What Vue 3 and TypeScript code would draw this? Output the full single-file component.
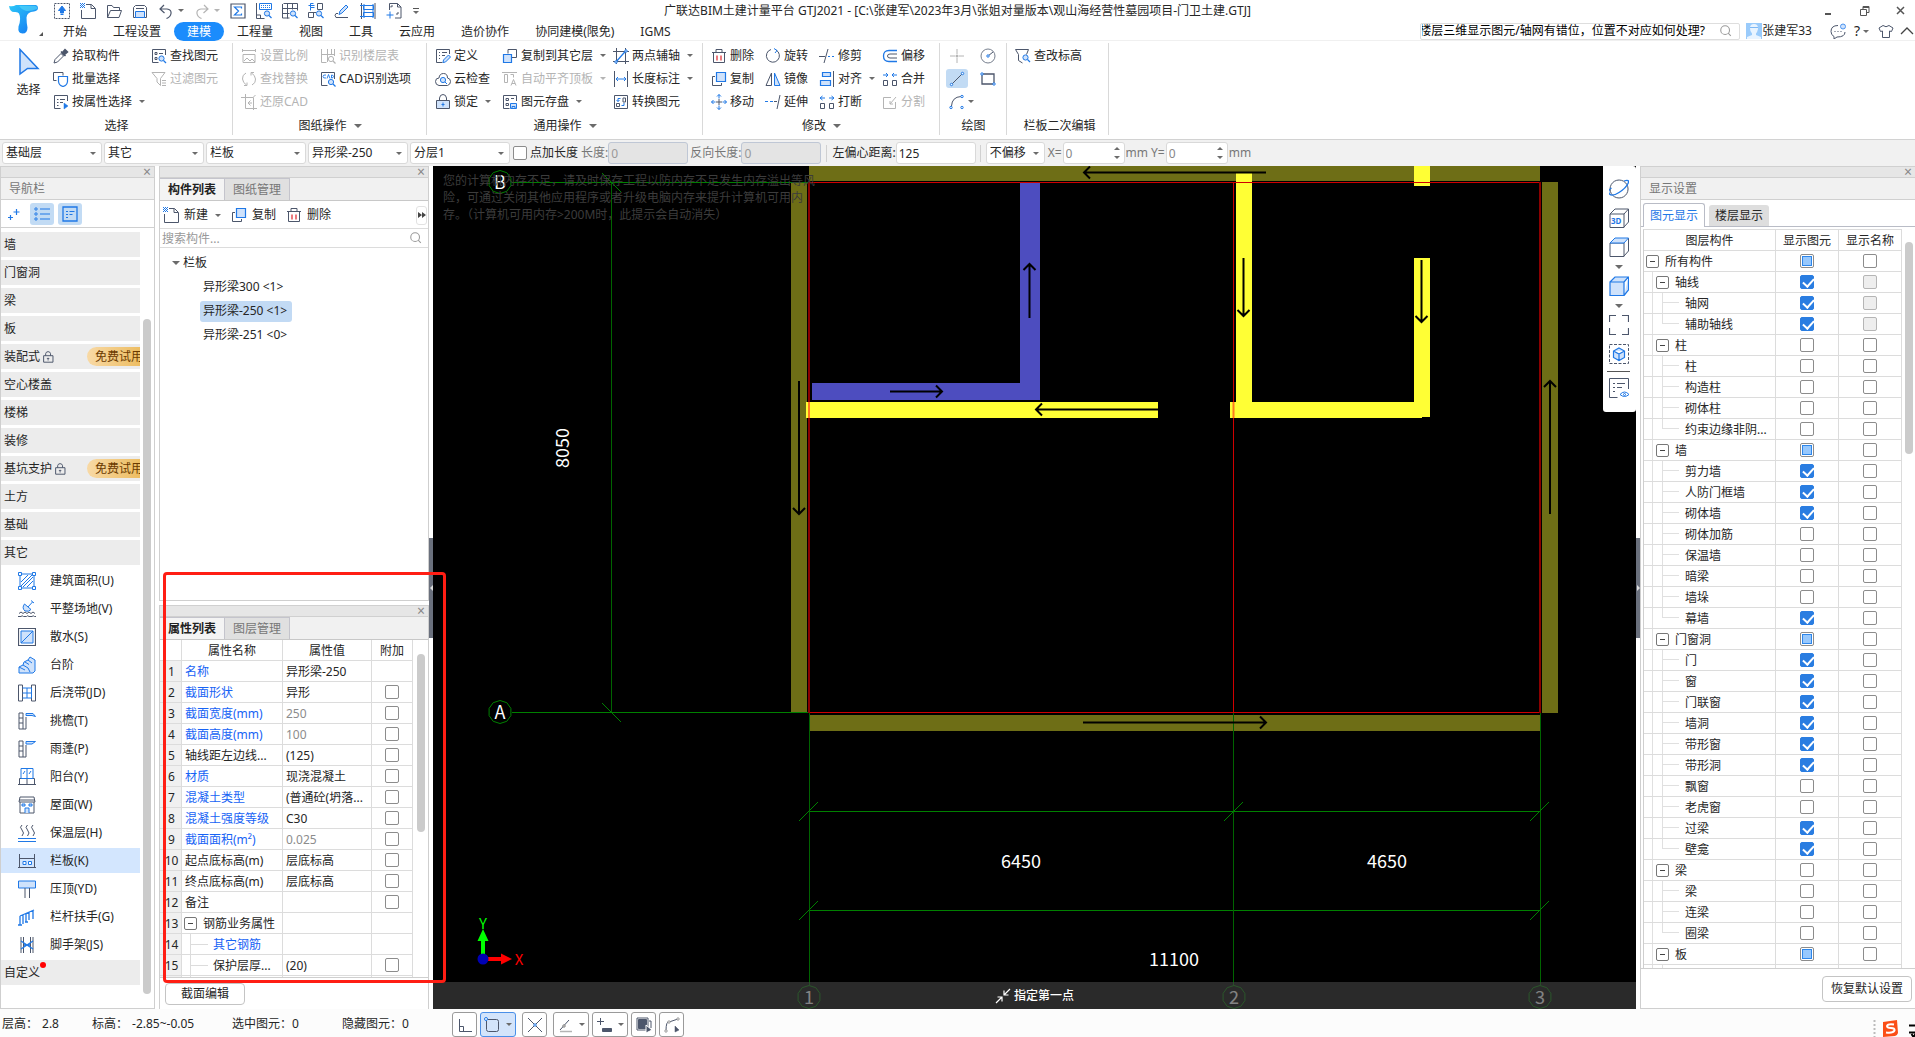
<script setup lang="ts">
import { ref } from 'vue'

const DARK = '#4c566b'
const BLUE = '#1f78e6'
const PALE = '#cfe2fb'
const GREY = '#b4b4b4'

const p = (c: string, d: string, f = 'none', w = 1, extra = '') =>
  `<path d="${d}" fill="${f}" stroke="${c}" stroke-width="${w}" ${extra}/>`
const D = (d: string, f = 'none', w = 1) => p(DARK, d, f, w)
const B = (d: string, f = 'none', w = 1) => p(BLUE, d, f, w)
const G = (d: string, f = 'none', w = 1) => p(GREY, d, f, w)
const lens = (x: number, y: number, c = BLUE, f = PALE) =>
  `<circle cx="${x}" cy="${y}" r="2.6" fill="${f}" stroke="${c}"/>` + p(c, `M${x + 2} ${y + 2}l2.5 2.5`, 'none', 1.3)
const dot = (x: number, y: number, c = BLUE, r = 1.2, f = '#fff') => `<circle cx="${x}" cy="${y}" r="${r}" fill="${f}" stroke="${c}"/>`

const icons: Record<string, string> = {
  upload: p(DARK, 'M.5.5h15v15H.5z', 'none', 1, 'stroke-dasharray="2 1"') + B('M8 3l3.5 4.5h-2V10h-3V7.5h-2zM6.5 11.5h3', BLUE),
  newdoc: D('M6 1.5h5.500l4 4v10h-14V7M11 1.500v4h4') + p(BLUE, 'M0 .5h5M1 1.500h4M0 2.500h5M1 3.500h4M0 4.500h5', 'none', 1, 'stroke-dasharray="1 1"'),
  open: D('M1.500 14.500v-12h4.500l1.500 2h6v3M1.500 14.500l3-7h11l-2.500 7z'),
  save: D('M1.500 14.500v-10l2-2h9l2 2v10zM4 5.500h8') + B('M3.500 8.500h9v6h-9z', PALE),
  undo: D('M6 2L2 6l4.500 4M2 6h7q4.500.5 4 4.500-.5 3.500-4.500 5', 'none', 1.2),
  redo: G('M10 2l4 4-4.500 4M14 6H7Q2.500 6.500 3 10.500q.5 3.500 4.500 5', 'none', 1.2),
  sigma: D('M1 1h14v14H1z', 'none', 1.2) + B('M11.500 5.500V4h-7L8.500 8l-4 4h7v-1.500', 'none', 1.2),
  sheet: D('M.5 0v15.500h8M.5 12h4v3') + B('M3.500.5h12v6h-12z') + p(BLUE, 'M5 2.500h9M5 4.500h9', 'none', 1, 'stroke-dasharray="1 1"') + lens(11, 10.500),
  gridlens: D('M1.500.5h14M.5 1v14h7M.5 5.500h15M.5 10.500h7M5.500.5v15M10.500.5v6M15.500.5v7') + lens(11, 10.500),
  find: D('M9.500.5h5v6h-5zM.5 9.500h5v5h-5zM5 9.500h3') + B('M5.500.5h-3v4h4M.5 2.500h6M2.500 4.500v3') + lens(11, 10.500),
  brush: D('M4 10.500H2Q0 12 2 14.500h12') + B('M5 11.500l1-3.500 6-6 2 2-6 6z', PALE),
  ladder: D('M1.500 0v16M15 0v16') + B('M3.500 2.500h10v4h-10zM3.500 9.500h10v4h-10zM0 2.500h3M0 13.500h3M4 1v14M13 1v14'),
  addpage: D('M3.500 7V.5h8l3.500 3.500v11H9M11.500.5V4H15M5 4.500V3h2M12 9v2h-2') + B('M4 8.500v7M.5 12h7'),
  picker: D('M1 15l1-3.500 6-6 2.500 2.500-6 6z') + D('M8 3.500L12.500 8M9 5l3-3.500 2.500 2.500L11 7z', DARK, 1.5),
  batch: D('M3.500 9.500h-3v-8h9.500v3') + B('M5.500 5.500h9v5q-.5 4-4.500 5-4-1-4.500-5z', '#fff', 1.2),
  byprop: D('M14.500 7V1.500h-13v13h6M4 5.500h1.500M7 5.500h5M4 8.500h1.500M7 8.500h3M4 11.500h1.500') + B('M11 9l4 3-4 3z', BLUE, .5),
  findel: D('M14.500 7V1.500h-13v13h6M4 4.500h2v2H4zM8 5.500h4M4 9.500h2v2H4z') + lens(10.500, 10.500),
  filter: G('M1 1.500h13l-4.500 6v7L6 11V7.500zM11 9.500h4M11 12h4M11 14.500h4'),
  scale: G('M1.500 1v3M14.500 1v3M1.500 2.500h13M2 6.500h12v8H2zM3 13l3-3 3 3 2-2 3 3'),
  floortab: G('M1.500 1v13.500h5M1.500 6.500h13M7.500 1v13M11.500 1v5M14.500 1v7') + lens(11, 11, GREY, '#fff'),
  replace: G('M5 2Q1 4 1.500 8t4 6M3 14.500h3V11.500M11 14q4-2 3.500-6t-4-6M13 1.500h-3v3'),
  cadopt: D('M14.500 8V1.500h-13v13h6') + lens(11, 11) + B('M6 4q-3-.5-3 1.500t3 1.500M7 7.500L8.500 3.500 10 7.500M11.500 4v3q2 0 2-1.500T11.500 4', 'none', .9),
  restore: G('M4.500 0v14.500H16M0 3.500h12.500V16M14.500 1l-2 2M11 9H8M9.500 6.500L7 9l2.500 2.500'),
  define: D('M14.500 6V1.500h-13v13h6M4 4.500h1M7 4.500h5M4 7.500h1M7 7.500h3M4 10.500h1') + B('M8 14.500l.5-2.500 5-5 2 2-5 5z', PALE),
  cloud: D('M4 14.500Q.5 14 .5 10.500T4 7q.5-4.500 4.500-4.500T12.500 7q3 .5 3 3.500t-3 4z') + '<circle cx="8" cy="9" r="2.600" fill="#cfe2fb" stroke="#1f78e6"/>' + B('M10 11l2 2'),
  lock: D('M4.500 6.500V4q.5-3.500 3.500-3.500T11.500 4v2.500') + D('M1.500 6.500h13v8h-13z', PALE) + B('M8 8.500v4M6.500 10.500h3'),
  copyfloor: D('M6 1.500h8.500v8H10M6 5.500v-4') + B('M1.500 6.500h8v8h-8z', PALE, 1.2),
  flush: G('M0 1.500h15M2.500 3.500h3v8h-3zM8.500 3.500h3v3M9 14.500l2.500-6 2.500 6M10 12.500h3'),
  storage: D('M14.500 7V1.500h-13v13h6M4 4.500h2.500v2H4zM9 4.500h3M4 9.500h2.500v2H4z') + B('M8.500 9.500h6v5h-6zM10 14.500v-2h3v2', PALE),
  twopt: D('M3.500 0v16M12.500 0v16M0 3.500h16M0 13.500h16') + B('M2.500 14.500L13.500 2', 'none', 1.3) + dot(13, 3) + dot(3, 14),
  dim: D('M1.500 0v16M14.500 0v16') + B('M3 8h10M5 6L3 8l2 2M11 6l2 2-2 2'),
  convert: D('M1.500 1.500h13v13h-13zM10 4h2.500v4H10zM3.500 9.500h3v3h-3z') + B('M7.500 4.500H5v3M3.500 6L5 7.500 6.500 6M8.500 11.500H11V9'),
  del: D('M1 4.500h14M5 4V1.500h6V4M2.500 5v9.500h11V5') + p('#e0252b', 'M6 7.500v5M10 7.500v5', 'none', 1.2),
  copy: D('M4 5.500H1.500v9h9V12') + B('M5.500 1.500h9v9h-9z', PALE, 1.2),
  move: B('M8 .5v15M.5 8h15M6 2.500l2-2 2 2M6 13.500l2 2 2-2M2.500 6l-2 2 2 2M13.500 6l2 2-2 2') + p('#fff', 'M5 5h6v6H5z', '#fff') + D('M8 5v6M5 8h6'),
  rotate: p(DARK, 'M6 1.500a6.500 6.500 0 1 0 5 .5', 'none') + B('M9 .5l3 2-2 2.500'),
  mirror: D('M6.500 2v12.500H1z') + B('M9.500 2v12.500H15z', PALE),
  extend: B('M0 7.500h3M5 7.500h3') + D('M9 7.500h3M15 1l-3 14'),
  trim: D('M0 8.500h6M9 1L5 15') + B('M9 8.500h2M13 8.500h2'),
  align: B('M3.500 1.500h8v4h-8zM1.500 9.500h10v5h-10z', PALE, 1.2) + D('M14.500 0v16'),
  break: D('M1.500 9.500h4v5h-4zM10.500 9.500h4v5h-4z') + B('M1 4h5M3.500 2L1 4l2.500 2M10 4h5M12.500 2L15 4l-2.500 2'),
  merge: D('M1.500 9.500h4v5h-4zM10.500 9.500h4v5h-4z') + B('M1 4h5M4 2l2 2-2 2M15 4h-5M12 2l-2 2 2 2'),
  offset: B('M15 2.500H7q-5.500 0-5.500 5.500T7 13.500h8', 'none', 1.3) + D('M15 6H8Q5.500 6 5.500 8T8 10h7'),
  split: G('M9 3.500H1.500v11h12V8M8 10l6-7M8 10v-3M8 10h3'),
  point: G('M8 1v5M8 10v5M1 8h5M10 8h5') + `<circle cx="8" cy="8" r="1.500" fill="${GREY}"/>`,
  circle: `<circle cx="8" cy="8" r="7" fill="none" stroke="#777f8e"/>` + D('M8 8l5-4') + dot(8, 8),
  line: D('M3 13L13 3') + dot(2.500, 13.500) + dot(13.500, 2.500),
  rect: D('M2 3h12v10H2z', 'none', 1.3) + dot(2, 3) + dot(14, 13),
  arc: D('M2.500 12Q3 3 12 2.500') + dot(2, 13.500) + dot(13, 2.500) + dot(13, 13.500),
  elev: D('M.5 1.500h13l-2 5M.5 1.500l3 5v6l4 2.500') + lens(10.500, 9.500),
  chat: D('M8 2.500Q1 2.500 1 8.500q0 3.500 3 5v2.500l3-2q8 0 8-5') + D('M4.500 8.500h1M7.500 8.500h1M10.500 8.500h1') + '<circle cx="13" cy="3.500" r="2.500" fill="#cfe2fb" stroke="#4a93f0"/>',
  shirt: D('M5 2.500L1 5l1.500 3.500L4.500 8v6.500h7V8l2 .5L15 5l-4-2.500Q8 5 5 2.500z'),
  search: '<circle cx="7" cy="7" r="5" fill="none" stroke="#999" stroke-width="1.200"/><path d="M10.500 10.500l3 3" stroke="#999" stroke-width="1.200"/>',
  padlock: D('M4.500 7V4.500Q5 2 7.500 2T10.500 4.500V7M2 7h11.500v8H2z', 'none', 1.2) + D('M7.500 9.500v3.500M6 10.500h3'),
  pluses: B('M4.500 9v5M2 11.500h5M10.500 3v6M7.500 6h6', 'none', 1.2),
  list: B('M6 3h10M6 8h10M6 13h10', 'none', 1.2) + dot(2, 3, BLUE, 1.2, 'none') + dot(2, 8, BLUE, 1.2, 'none') + dot(2, 13, BLUE, 1.2, 'none'),
  card: B('M1 1h14v14H1z', 'none', 1.3) + B('M4 5.500h2M7.500 5.500h5M4 8.500h2M7.500 8.500h3M4 11.500h2'),
}

const navIcons: Record<string, string> = {
  area: B('M2 2h14v14H2zM3 10l7-7M3 14L14 3M5 15L15 5M9 15l6-6') + B('M.5.5h3v3h-3zM14.500.5h3v3h-3zM.5 14.500h3v3h-3zM14.500 14.500h3v3h-3z', '#fff'),
  level: B('M10 7l4.500-5M13 .500l3 2.500M6.500 4q-3 4 .5 7 4 1 6-1.500z', PALE) + D('M1 13.500l2-1.500 2 1.500 2-1.500 2 1.500 2-1.500 2 1.500 2-1.500 2 1.500M0 16.500h3q1-1.500 2.500 0h3q1-1.500 2.500 0h3q1-1.500 2.500 0H18'),
  water: D('M.5.500h17v17H.500z', 'none', 1.2) + B('M3 3h12v12H3z', PALE) + B('M3 15L15 3'),
  steps: B('M1 17v-6l4-2 1-3 4-2 2-3 5 3v11l-2 2z', PALE) + B('M5 9l5 3 2 4M7 6l4 2.500M10 4l4 3M1 11l6 3'),
  band: D('M.5 1h4v16h-4zM13.500 1h4v16h-4z') + B('M4.500 4h9v10h-9M4.500 9h9M9 4v10'),
  eaveT: D('M1 1v16h7V5M1 1h4v16M1 6h4M1 11h4') + B('M8 1.500h7l2.500 3-3.500-1H8z', PALE),
  eaveP: D('M1 1v16h7V5M1 1h4v16M1 6h4M1 11h4') + B('M8 1.500h9.500L14 4H8z', PALE),
  balcony: D('M0 16.500h18M1.500 16.500v-6h15v6M9 10v6') + B('M3 .500h12v10H3zM9 1v9M5 6l2-3M11 6l2-3', 'none'),
  roof: D('M2 1h14l1 5H1zM2 6v11h14V6M1 4h16') + B('M7 17v-5h4v5M4 8h3v2H4zM11 8h3v2h-3z', PALE),
  insul: D('M4 1Q1 3 4 6t0 6M9.500 1q-3 2 0 5t0 6M15 1q-3 2 0 5t0 6') + B('M0 14.500h18M0 17.500h18', 'none', 1.2),
  rail: D('M1.500 2v14M16.500 2v14M1 6.500h16M0 15.500h18') + B('M5 9.500h3v3H5zM10.500 9.500h3v3h-3z', '#fff'),
  coping: B('M.5 1h17v7H.5z', PALE) + D('M7 8v10M11.500 8v10'),
  hand: B('M2 8l14-6M2 8v9M5 7v9M8 6v8M11 4v8M15 2v9M0 17h4M7 14h3', 'none', 1.3),
  scaffold: D('M3 1v16M15 1v16M5.500 1v16M12.500 1v16') + B('M3 5l12 8M3 13l12-8M6 9h6', 'none', 1.3),
}

const quick = [
  { i: 'upload', w: 26 }, { i: 'newdoc', w: 26 }, { i: 'open', w: 26 }, { i: 'save', w: 26 },
  { i: 'undo', w: 36, a: 1 }, { i: 'redo', w: 36, a: 2 }, { i: 'sigma', w: 26 }, { i: 'sheet', w: 26 },
  { i: 'gridlens', w: 26 }, { i: 'find', w: 26 }, { i: 'brush', w: 26 }, { i: 'ladder', w: 26 }, { i: 'addpage', w: 26 },
]
const menus = ['开始', '工程设置', '建模', '工程量', '视图', '工具', '云应用', '造价协作', '协同建模(限免)', 'IGMS']

interface Cmd { i: string; t: string; off?: boolean; a?: boolean; on?: boolean }
interface Group { name: string; cls: string; a?: boolean; cols: Cmd[][] }
const groups: Group[] = [
  { name: '选择', cls: 'g1', cols: [
    [{ i: 'picker', t: '拾取构件' }, { i: 'batch', t: '批量选择' }, { i: 'byprop', t: '按属性选择', a: true }],
    [{ i: 'findel', t: '查找图元' }, { i: 'filter', t: '过滤图元', off: true }]] },
  { name: '图纸操作', cls: 'g2', a: true, cols: [
    [{ i: 'scale', t: '设置比例', off: true }, { i: 'replace', t: '查找替换', off: true }, { i: 'restore', t: '还原CAD', off: true }],
    [{ i: 'floortab', t: '识别楼层表', off: true }, { i: 'cadopt', t: 'CAD识别选项' }]] },
  { name: '通用操作', cls: 'g3', a: true, cols: [
    [{ i: 'define', t: '定义' }, { i: 'cloud', t: '云检查' }, { i: 'lock', t: '锁定', a: true }],
    [{ i: 'copyfloor', t: '复制到其它层', a: true }, { i: 'flush', t: '自动平齐顶板', off: true, a: true }, { i: 'storage', t: '图元存盘', a: true }],
    [{ i: 'twopt', t: '两点辅轴', a: true }, { i: 'dim', t: '长度标注', a: true }, { i: 'convert', t: '转换图元' }]] },
  { name: '修改', cls: 'g4', a: true, cols: [
    [{ i: 'del', t: '删除' }, { i: 'copy', t: '复制' }, { i: 'move', t: '移动' }],
    [{ i: 'rotate', t: '旋转' }, { i: 'mirror', t: '镜像' }, { i: 'extend', t: '延伸' }],
    [{ i: 'trim', t: '修剪' }, { i: 'align', t: '对齐', a: true }, { i: 'break', t: '打断' }],
    [{ i: 'offset', t: '偏移' }, { i: 'merge', t: '合并' }, { i: 'split', t: '分割', off: true }]] },
  { name: '绘图', cls: 'g5', cols: [
    [{ i: 'point', t: '', off: true }, { i: 'line', t: '', on: true }, { i: 'arc', t: '', a: true }],
    [{ i: 'circle', t: '' }, { i: 'rect', t: '' }]] },
  { name: '栏板二次编辑', cls: 'g6', cols: [[{ i: 'elev', t: '查改标高' }]] },
]

const selects = ['基础层', '其它', '栏板', '异形梁-250', '分层1']

const navGroups = [
  { t: '墙' }, { t: '门窗洞' }, { t: '梁' }, { t: '板' }, { t: '装配式', trial: true }, { t: '空心楼盖' }, { t: '楼梯' },
  { t: '装修' }, { t: '基坑支护', trial: true }, { t: '土方' }, { t: '基础' }, { t: '其它' },
]
const navItems = [
  ['area', '建筑面积(U)'], ['level', '平整场地(V)'], ['water', '散水(S)'], ['steps', '台阶'], ['band', '后浇带(JD)'],
  ['eaveT', '挑檐(T)'], ['eaveP', '雨蓬(P)'], ['balcony', '阳台(Y)'], ['roof', '屋面(W)'], ['insul', '保温层(H)'],
  ['rail', '栏板(K)'], ['coping', '压顶(YD)'], ['hand', '栏杆扶手(G)'], ['scaffold', '脚手架(JS)'],
]
const activeNav = ref('rail')

const parts = ['异形梁300 <1>', '异形梁-250 <1>', '异形梁-251 <0>']
const activePart = ref('异形梁-250 <1>')

interface Prop { n: string; v: string; blue?: boolean; dim?: boolean; box?: boolean; lv?: number }
const props: Prop[] = [
  { n: '名称', v: '异形梁-250', blue: true },
  { n: '截面形状', v: '异形', blue: true, box: true },
  { n: '截面宽度(mm)', v: '250', blue: true, dim: true, box: true },
  { n: '截面高度(mm)', v: '100', blue: true, dim: true, box: true },
  { n: '轴线距左边线...', v: '(125)', box: true },
  { n: '材质', v: '现浇混凝土', blue: true, box: true },
  { n: '混凝土类型', v: '(普通砼(坍落...', blue: true, box: true },
  { n: '混凝土强度等级', v: 'C30', blue: true, box: true },
  { n: '截面面积(m²)', v: '0.025', blue: true, dim: true, box: true },
  { n: '起点底标高(m)', v: '层底标高', box: true },
  { n: '终点底标高(m)', v: '层底标高', box: true },
  { n: '备注', v: '', box: true },
  { n: '钢筋业务属性', v: '', lv: 1 },
  { n: '其它钢筋', v: '', blue: true, lv: 2 },
  { n: '保护层厚...', v: '(20)', box: true, lv: 2 },
  { n: '', v: '', lv: 2 },
]

// name, depth, state of the first box: 0 empty, 1 ticked, 2 partly ticked
const layerData: [string, number, number][] = [
  ['所有构件', 0, 2], ['轴线', 1, 1], ['轴网', 2, 1], ['辅助轴线', 2, 1], ['柱', 1, 0], ['柱', 2, 0], ['构造柱', 2, 0],
  ['砌体柱', 2, 0], ['约束边缘非阴...', 2, 0], ['墙', 1, 2], ['剪力墙', 2, 1], ['人防门框墙', 2, 1], ['砌体墙', 2, 1],
  ['砌体加筋', 2, 0], ['保温墙', 2, 0], ['暗梁', 2, 0], ['墙垛', 2, 0], ['幕墙', 2, 1], ['门窗洞', 1, 2], ['门', 2, 1],
  ['窗', 2, 1], ['门联窗', 2, 1], ['墙洞', 2, 1], ['带形窗', 2, 1], ['带形洞', 2, 1], ['飘窗', 2, 0], ['老虎窗', 2, 0],
  ['过梁', 2, 1], ['壁龛', 2, 1], ['梁', 1, 0], ['梁', 2, 0], ['连梁', 2, 0], ['圈梁', 2, 0], ['板', 1, 2], ['', 2, 1],
]
const layers = layerData.map(([n, lv, s], i) => ({
  n, lv, s,
  noName: i >= 1 && i <= 3,
  last: lv === 2 && layerData[i + 1]?.[1] !== 2,
}))

const decagon = (cx: number, cy: number, r = 11.5) =>
  Array.from({ length: 10 }, (_, k) => {
    const a = (k * Math.PI) / 5 + Math.PI / 2
    return `${(cx + r * Math.cos(a)).toFixed(1)},${(cy - r * Math.sin(a)).toFixed(1)}`
  }).join(' ')
const bubbles = [
  { t: 'B', x: 500, y: 182 }, { t: 'A', x: 500, y: 712 },
  { t: '1', x: 809, y: 997 }, { t: '2', x: 1234, y: 997 }, { t: '3', x: 1540, y: 997 },
]
const arrows = [
  'M1266 172.500H1084M1090 166.500l-6 6 6 6', 'M799 381v133M793 508l6 6 6-6', 'M1083 722.500h183M1260 716.500l6 6-6 6',
  'M1550 514V381M1544 387l6-6 6 6', 'M1029.500 318v-54M1023.500 270l6-6 6 6', 'M890 391.500h52M936 385.500l6 6-6 6',
  'M1158 409.500h-122M1042 403.500l-6 6 6 6', 'M1243.500 258v58M1237.500 310l6 6 6-6', 'M1421.500 260v62M1415.500 316l6 6 6-6',
]

const statusBtns = [
  { n: '正交', w: 0, s: D('M2.500 2v12.500H15M2.500 9.500h4v5') },
  { n: '对象捕捉', w: 1, s: D('M4 2.500h8.500q2 0 2 2v8q0 2-2 2h-8q-2 0-2-2V4') + dot(2, 2, BLUE, 1.5), on: true },
  { n: '交点捕捉', w: 0, s: D('M1 1l14 14M15 1L1 15') + dot(8, 8), gap: true },
  { n: '角度', w: 1, s: D('M3 13L12 3') + G('M3 14.500h12', 'none', 1.5) + dot(7, 9, '#777', 1.2), gap: true },
  { n: '动态输入', w: 1, s: D('M1 4.500h7M4.500 1v7') + D('M6.500 11.500h9v3h-9z', DARK) },
  { n: '图层', w: 0, s: D('M2.500 2.500h8v9h-8z', DARK) + D('M1 1h11v12H1zM13 4h2v7') + p('#fff', 'M10 8l6 5-6 3z', DARK) },
  { n: '折线', w: 0, s: D('M2 14Q2 4 5 5M5 5l9-3') + dot(5, 5, '#999') + dot(14, 2, '#999') + dot(2, 14, '#999') + D('M11 9l4 4-4 2z', DARK, .5) },
]

const viewTools = [
  { n: '旋转视图', s: D('M10 1a9 9 0 1 0 .1 0') + B('M15 2q6-2 4 2.500t-9 9-9.500 1.500 2-6', 'none', 1.3) },
  { n: '三维', s: D('M1 6h14v13.500H1zM1 6l5-5h13.500l-4.500 5M19.500 1v13L15 19'), t: '3D' },
  { n: '俯视', s: D('M1 6h14v13.500H1zM19.500 1v13L15 19') + B('M1 6l5-5h13.500L15 6z', PALE), a: true },
  { n: '着色', s: B('M1 6h14v13.500H1zM1 6l5-5h13.500L15 6M19.500 1v13L15 19.500', PALE, 1.2), a: true },
  { n: '全屏', s: D('M.5 7V.5H7M13 .5h6.500V7M19.500 13v6.500H13M7 19.500H.5V13', 'none', 1.2) },
  { n: '局部三维', s: p(DARK, 'M.5.5h19v19H.5z', 'none', 1, 'stroke-dasharray="3 1.500"') + B('M10 4l5.500 3v6.500L10 16.500l-5.500-3V7zM4.500 7L10 10l5.500-3M10 10v6', PALE, 1.2) },
  { n: '显示设置', s: D('M19.500 11V.5H.5v19h8M4 5.500h2M8 5.500h8M4 9.500h2M8 9.500h5M4 13.500h2') + B('M11 16.500q4.500-5 9 0-4.500 4-9 0z', '#fff') + dot(15.500, 16.500, BLUE, 1), sep: true },
]
</script>

<template>
  <div class="app">
    <header class="head">
      <button class="logo" aria-label="菜单">
        <svg width="50" height="40" viewBox="0 0 50 40">
          <defs>
            <linearGradient id="lg" x1="0" y1="0" x2="1" y2="1">
              <stop offset="0" stop-color="#2cc8f8" /><stop offset="1" stop-color="#1272f2" />
            </linearGradient>
          </defs>
          <path d="M9 5q4 1 7-1h20q2 .5 2 3t-4 3.500q-7 .5-7.500 6 0 5 1 10 0 6-5 6t-4-7q3-8 .500-13-1-2-5-1.500Q10 11 9 5z" fill="url(#lg)" />
          <path d="M19 5h16q3 .5 2 3-8 3-12 1.500T19 5z" fill="#5ad8f8" opacity=".6" />
          <path d="M43 31v4h-4z" fill="#555" />
        </svg>
      </button>
      <div class="quick">
        <button v-for="q in quick" :key="q.i" :aria-label="q.i" :style="{ width: q.w + 'px' }">
          <svg width="16" height="16" viewBox="0 0 16 16" v-html="icons[q.i]"></svg>
          <i v-if="q.a" class="car" :class="{ faint: q.a === 2 }"></i>
        </button>
        <button class="more" aria-label="更多"><i class="car"></i></button>
      </div>
      <h1>广联达BIM土建计量平台 GTJ2021 - [C:\张建军\2023年3月\张姐对量版本\观山海经营性墓园项目-门卫土建.GTJ]</h1>
      <div class="win">
        <button aria-label="最小化"><svg width="12" height="12" viewBox="0 0 12 12"><path d="M2 9h6" stroke="#555" stroke-width="2" /></svg></button>
        <button aria-label="还原"><svg width="12" height="12" viewBox="0 0 12 12"><path d="M1.500 4.500h6v6h-6zM4 4V1.500h6v6H8M4 2.500h6" fill="none" stroke="#555" /></svg></button>
        <button aria-label="关闭"><svg width="12" height="12" viewBox="0 0 12 12"><path d="M2 2l7 7M9 2L2 9" stroke="#555" stroke-width="1.500" /></svg></button>
      </div>
      <nav class="menus">
        <button v-for="m in menus" :key="m" :class="{ on: m === '建模' }">{{ m }}</button>
        <div class="user">
          <label class="ask">
            <input type="text" aria-label="搜索问题" value="楼层三维显示图元/轴网有错位，位置不对应如何处理?" />
            <svg width="14" height="14" viewBox="0 0 16 16" v-html="icons.search"></svg>
          </label>
          <svg class="face" width="16" height="16" viewBox="0 0 16 16">
            <path d="M0 0h16v16H0z" fill="#9acbfb" /><path d="M4 5q0-4 4-4t4 4v1q-1 4-2 4.500V12l5 2v2H1v-2l5-2v-1.500Q4 9 4 5z" fill="#e9f4ff" /><path d="M4 4.500h8" stroke="#7fb9f5" />
          </svg>
          <span class="name">张建军33</span>
          <button aria-label="消息"><svg width="16" height="16" viewBox="0 0 16 16" v-html="icons.chat"></svg></button>
          <button class="help">?<i class="car"></i></button>
          <button aria-label="皮肤"><svg width="16" height="16" viewBox="0 0 16 16" v-html="icons.shirt"></svg></button>
          <button aria-label="收起"><svg width="14" height="8" viewBox="0 0 14 8"><path d="M1 7l6-6 6 6" fill="none" stroke="#444" stroke-width="1.300" /></svg></button>
        </div>
      </nav>
    </header>

    <section class="ribbon">
      <div v-for="g in groups" :key="g.name" class="group" :class="g.cls">
        <div class="body">
          <button v-if="g.cls === 'g1'" class="big">
            <svg width="24" height="28" viewBox="0 0 24 28"><path d="M3 1.500l18 19H10.500L3 26z" fill="#cfe2fb" stroke="#1f78e6" stroke-width="1.500" /></svg>
            选择
          </button>
          <div v-for="(c, k) in g.cols" :key="k" class="col">
            <button v-for="b in c" :key="b.i" class="cmd" :class="{ off: b.off, on: b.on }" :disabled="b.off" :aria-label="b.t || b.i">
              <svg width="16" height="16" viewBox="0 0 16 16" v-html="icons[b.i]"></svg>
              <span v-if="b.t">{{ b.t }}</span>
              <i v-if="b.a" class="car"></i>
            </button>
          </div>
        </div>
        <div class="glabel">{{ g.name }}<i v-if="g.a" class="car wide"></i></div>
      </div>
    </section>

    <section class="params">
      <span v-for="s in selects" :key="s" class="sel">
        <select :aria-label="s"><option>{{ s }}</option></select><i class="car"></i>
      </span>
      <label class="tick"><input type="checkbox" /><span>点加长度</span></label>
      <label class="dimmed">长度:<input type="text" value="0" disabled /></label>
      <label class="dimmed">反向长度:<input type="text" value="0" disabled /></label>
      <i class="bar"></i>
      <label class="lit">左偏心距离:<input type="text" value="125" /></label>
      <i class="bar"></i>
      <span class="sel short"><select aria-label="偏移方式"><option>不偏移</option></select><i class="car"></i></span>
      <label v-for="ax in ['X=', 'Y=']" :key="ax" class="spin">{{ ax }}
        <span><input type="text" value="0" /><i class="car up"></i><i class="car dn"></i></span>mm</label>
    </section>

    <main>
      <aside class="panel nav">
        <div class="strip"><button aria-label="关闭导航栏">×</button></div>
        <div class="ptitle">导航栏</div>
        <div class="navtools">
          <button aria-label="展开"><svg width="16" height="16" viewBox="0 0 16 16" v-html="icons.pluses"></svg></button>
          <button class="on" aria-label="列表"><svg width="16" height="16" viewBox="0 0 16 16" v-html="icons.list"></svg></button>
          <button class="on" aria-label="卡片"><svg width="16" height="16" viewBox="0 0 16 16" v-html="icons.card"></svg></button>
        </div>
        <div class="navbody">
          <div class="navlist">
            <button v-for="g in navGroups" :key="g.t" class="ngroup">
              {{ g.t }}<svg v-if="g.trial" width="13" height="13" viewBox="0 0 16 16" v-html="icons.padlock"></svg>
              <em v-if="g.trial">免费试用</em>
            </button>
            <button v-for="n in navItems" :key="n[0]" class="nitem" :class="{ on: n[0] === activeNav }" @click="activeNav = n[0]">
              <svg width="18" height="18" viewBox="0 0 18 18" v-html="navIcons[n[0]]"></svg>{{ n[1] }}
            </button>
            <button class="ngroup">自定义<b class="reddot"></b></button>
          </div>
          <div class="track"><i class="thumb navthumb"></i></div>
        </div>
      </aside>

      <div class="mid">
        <section class="panel comps">
          <div class="strip"><button aria-label="关闭构件列表">×</button></div>
          <div class="tabs"><button class="on">构件列表</button><button>图纸管理</button></div>
          <div class="tools">
            <button><svg width="16" height="16" viewBox="0 0 16 16" v-html="icons.newdoc"></svg>新建<i class="car"></i></button>
            <button><svg width="16" height="16" viewBox="0 0 16 16" v-html="icons.copy"></svg>复制</button>
            <button><svg width="16" height="16" viewBox="0 0 16 16" v-html="icons.del"></svg>删除</button>
            <button class="ff" aria-label="更多"><svg width="8" height="6" viewBox="0 0 8 6"><path d="M0 0l4 3-4 3zM4 0l4 3-4 3z" fill="#444" /></svg></button>
          </div>
          <label class="find"><input type="text" placeholder="搜索构件..." aria-label="搜索构件" />
            <svg width="14" height="14" viewBox="0 0 16 16" v-html="icons.search"></svg></label>
          <ul class="tree">
            <li class="root"><i class="car wide"></i>栏板</li>
            <li v-for="c in parts" :key="c"><button :class="{ on: c === activePart }" @click="activePart = c">{{ c }}</button></li>
          </ul>
        </section>
        <section class="panel attrs">
          <div class="strip"><button aria-label="关闭属性列表">×</button></div>
          <div class="tabs"><button class="on">属性列表</button><button>图层管理</button></div>
          <div class="tablebox">
            <table class="ptable">
              <colgroup><col class="c1" /><col /><col class="c3" /><col class="c4" /></colgroup>
              <thead><tr><th></th><th>属性名称</th><th>属性值</th><th>附加</th></tr></thead>
              <tbody>
                <tr v-for="(r, i) in props" :key="i">
                  <td class="num">{{ r.n ? i + 1 : '' }}</td>
                  <td class="nm" :class="['p' + (r.lv || 0), { blue: r.blue }]"><i v-if="r.lv === 1" class="fold"></i>{{ r.n }}</td>
                  <td class="val" :class="{ dim: r.dim }">{{ r.v }}</td>
                  <td><input v-if="r.box" type="checkbox" :aria-label="r.n" /></td>
                </tr>
              </tbody>
            </table>
            <div class="track"><i class="thumb attrthumb"></i></div>
          </div>
          <div class="foot"><button class="plain">截面编辑</button></div>
        </section>
      </div>
      <div class="split"><i></i></div>

      <section class="canvas">
        <svg class="draw" viewBox="433 166 1203 843" preserveAspectRatio="xMinYMin meet">
          <g fill="#6e6e16">
            <path d="M809 166h731v15H809zM791 182h16v531h-16zM809 715h731v16H809zM1542 182h16v531h-16z" />
          </g>
          <g fill="none" stroke="#008000">
            <path d="M512 182.500h297M512 712.500h297M809 811.500h731M809 910.500h731" />
            <path d="M611.500 182v530M809.500 713v272M1233.500 713v272M1540.500 713v272" stroke="#006400" />
            <path d="M602 173l19 19M602 703l19 19M799 821l19-19M1224 821l19-19M1530 821l19-19M799 920l19-19M1530 920l19-19" />
            <polygon v-for="b in bubbles" :key="b.t" :points="decagon(b.x, b.y)" />
          </g>
          <path d="M1020 183h20v217H812v-17h208z" fill="#4d4dbf" />
          <path d="M806 402h352v16H806zM1236 173h16v229h162V258h16v159h-8v1h-192v-16h6zM1414 166h16v20h-16z" fill="#ffff35" />
          <g fill="none">
            <path d="M809 182.500h731M809 712.500h731M1233.500 182v531" stroke="#d00000" />
            <path d="M809 182v531M1540 182v531" stroke="#8a0000" stroke-width="2" />
            <path d="M809 402v16M1233.500 402v16" stroke="#ff7a20" stroke-width="2" />
            <path v-for="a in arrows" :key="a" :d="a" stroke="#000" stroke-width="2" />
          </g>
          <g class="dims">
            <text x="1021" y="868">6450</text><text x="1387" y="868">4650</text><text x="1174" y="966">11100</text>
            <text transform="translate(569 448) rotate(-90)">8050</text>
            <text v-for="b in bubbles" :key="b.t" :x="b.x" :y="b.y + 7">{{ b.t }}</text>
          </g>
          <path d="M481 955v-14h-3.500l5.500-12 5.500 12H485v14z" fill="#0f0" />
          <path d="M487 957h14v-3.500l11 5.500-11 5.500V961h-14z" fill="#f00" />
          <circle cx="483" cy="959" r="5.500" fill="#0000b4" />
          <g class="axes"><text x="483" y="929" fill="#0f0">Y</text><text x="519" y="965" fill="#f00">X</text></g>
        </svg>
        <p class="warn">您的计算机内存不足，请及时保存工程以防内存不足发生内存溢出等风<br />险，可通过关闭其他应用程序或者升级电脑内存来提升计算机可用内<br />存。（计算机可用内存&gt;200M时，此提示会自动消失）</p>
        <div class="viewbar">
          <template v-for="v in viewTools" :key="v.n">
            <hr v-if="v.sep" />
            <button :aria-label="v.n">
              <svg width="20" height="20" viewBox="0 0 20 20"><g v-html="v.s"></g><text v-if="v.t" x="2" y="16">{{ v.t }}</text></svg>
            </button>
            <i v-if="v.a" class="car wide"></i>
          </template>
        </div>
        <div class="prompt">
          <svg width="16" height="16" viewBox="0 0 16 16"><path d="M1 15l6-6M2.500 9H7v4.500M15 1L9 7M9 2.500V7h4.500" fill="none" stroke="#fff" stroke-width="1.200" /></svg>指定第一点
        </div>
      </section>
      <div class="split right"><i></i></div>

      <aside class="panel show">
        <div class="strip"><button aria-label="关闭显示设置">×</button></div>
        <div class="ptitle">显示设置</div>
        <div class="rtabs"><button class="on">图元显示</button><button>楼层显示</button></div>
        <div class="rbox">
          <div class="clip">
            <table class="ltable">
              <colgroup><col /><col class="k" /><col class="k" /></colgroup>
              <thead><tr><th>图层构件</th><th>显示图元</th><th>显示名称</th></tr></thead>
              <tbody>
                <tr v-for="(l, i) in layers" :key="i">
                  <td class="ln" :class="['l' + l.lv, { last: l.last }]"><i v-if="l.lv < 2" class="fold"></i><u v-else></u>{{ l.n }}</td>
                  <td><input type="checkbox" :checked="l.s === 1" :indeterminate="l.s === 2" :aria-label="l.n + '显示图元'" /></td>
                  <td><input type="checkbox" :disabled="l.noName" :aria-label="l.n + '显示名称'" /></td>
                </tr>
              </tbody>
            </table>
          </div>
          <div class="track"><i class="thumb showthumb"></i></div>
        </div>
        <div class="foot end"><button class="plain">恢复默认设置</button></div>
      </aside>
      <div class="mark"></div>
    </main>

    <footer>
      <span class="s1">层高：<b>2.8</b></span><span class="s2">标高：<b>-2.85~-0.05</b></span>
      <span class="s3">选中图元：<b>0</b></span><span class="s4">隐藏图元：<b>0</b></span>
      <button v-for="s in statusBtns" :key="s.n" :aria-label="s.n" :class="{ on: s.on, w: s.w, gap: s.gap }">
        <svg width="16" height="16" viewBox="0 0 16 16" v-html="s.s"></svg><i v-if="s.w" class="car"></i>
      </button>
      <div class="ime">
        <svg width="42" height="18" viewBox="0 0 42 18">
          <path d="M1.500 1v17" stroke="#bbb" stroke-width="2" stroke-dasharray="2 2" />
          <path d="M10 3l14-2 1 13q-1 3-3 3l-12 1z" fill="#fb4e16" />
          <path d="M21 5.500q-6-1-7 1.500 0 2 4 2t3.500 2.500Q20 14.500 13 13.500" fill="none" stroke="#fff" stroke-width="2" />
          <path d="M36 6.500h6M36 13.500h6M38.500 15l2 3 2-3" stroke="#000" stroke-width="2" fill="none" />
        </svg>
      </div>
    </footer>
  </div>
</template>

<style>
body { overflow: hidden; background: #fff; }
</style>

<style scoped>
.app, .app * { box-sizing: border-box; }
.app {
  display: flex; flex-direction: column; height: 100vh; min-width: 1280px;
  font: 12px/16px "Noto Sans", "Noto Sans CJK SC", sans-serif; color: #262626; background: #fff; white-space: nowrap;
}
button { font: inherit; color: inherit; background: none; border: 0; padding: 0; margin: 0; display: flex; align-items: center; white-space: nowrap; }
input, select { font: inherit; color: inherit; margin: 0; }
svg { display: block; flex: none; }
.car { display: block; flex: none; width: 0; height: 0; border: 3px solid transparent; border-top: 3px solid #6b6b6b; border-bottom: 0; }
.car.wide { border-width: 4px 4px 0; }
.car.faint { border-top-color: #b4b4b4; }

input[type=checkbox] {
  appearance: none; display: block; width: 14px; height: 14px; flex: none; position: relative;
  border: 1px solid #8c8c8c; border-radius: 2px; background: #fff;
}
input[type=checkbox]:checked { background: #2a7de1; border-color: #2a7de1; }
input[type=checkbox]:checked::before {
  content: ""; position: absolute; left: 4px; top: 0; width: 5px; height: 9px;
  border: solid #fff; border-width: 0 2px 2px 0; transform: rotate(42deg);
}
input[type=checkbox]:indeterminate::before {
  content: ""; position: absolute; inset: 1px; background: #97c8fd; border: 1px solid #2d86ea;
}
input[type=checkbox]:disabled { background: #eee; border-color: #b5b5b5; }

.head { display: grid; grid-template-columns: 50px 1fr auto 1fr 50px; grid-template-rows: 21px 20px; border-bottom: 1px solid #f0f0f0; height: 41px; flex: none; }
.logo { grid-row: 1 / 3; }
.quick { display: flex; padding-left: 4px; }
.quick button { gap: 4px; }
h1 { font: inherit; margin: 0; line-height: 21px; }
.win { grid-column: 4 / 6; display: flex; justify-content: flex-end; gap: 24px; padding-right: 8px; }
.more { border-top: 1px solid #555; align-self: center; margin-left: 1px; padding-top: 2px; }
.menus { grid-column: 2 / 6; display: flex; }
.menus > button { padding: 0 13px; height: 19px; margin-top: 1px; border-radius: 10px; }
.menus > button.on { background: #1b8cfc; color: #fff; }
.user { margin-left: auto; display: flex; align-items: center; padding-right: 1px; }
.ask { width: 320px; height: 17px; border: 1px solid #dedede; border-radius: 2px; display: flex; align-items: center; padding: 0 6px 0 1px; }
.ask input { flex: 1; min-width: 0; border: 0; padding: 0; text-indent: -3px; height: 15px; background: none; color: #000; }
.face { margin-left: 6px; }
.name { margin-right: 18px; }
.help { margin: 0 9px 0 8px; gap: 3px; font-size: 14px; }
.user button:last-child { margin-left: 6px; }

.ribbon { display: flex; height: 98px; flex: none; }
.group { display: flex; flex-direction: column; position: relative; }
.group::after { content: ""; position: absolute; right: 0; top: 2px; bottom: 4px; width: 1px; background: #d9d9d9; }
.body { display: flex; padding: 3px 0 0 8px; height: 72px; }
.glabel { display: flex; justify-content: center; align-items: center; gap: 7px; height: 26px; }
.g1 { width: 233px; } .g1 .body { padding-left: 4px; }
.g2 { width: 194px; } .g3 { width: 276px; } .g4 { width: 237px; } .g5 { width: 67px; } .g6 { width: 102px; }
.big { flex-direction: column; width: 49px; gap: 6px; padding-top: 4px; justify-content: flex-start; }
.cmd { height: 23px; gap: 3px; }
.cmd .car { margin-left: 4px; }
.cmd.off { color: #b4b4b4; }
.cmd.off .car { border-top-color: #b4b4b4; }
.g1 .col:nth-child(2) { width: 98px; }
.g2 .col:first-child { width: 79px; }
.g3 .col:first-child { width: 67px; } .g3 .col:nth-child(2) { width: 111px; }
.g4 .col:first-child, .g4 .col:nth-child(2) { width: 54px; } .g4 .col:nth-child(3) { width: 63px; }
.g5 .body { padding-left: 6px; } .g5 .col:first-child { width: 31px; }
.g5 .cmd { padding: 0 3px; gap: 0; }
.g5 .cmd .car { margin-left: 3px; }
.g5 .cmd.on { background: #c2dbf4; border-radius: 3px; width: 22px; height: 19px; margin: 2px 0; }
.g6 .glabel { padding-left: 3px; }

.params { display: flex; align-items: center; height: 27px; flex: none; background: #f1f1f1; border-top: 1px solid #d2d2d2; padding-left: 2px; }
.sel { position: relative; width: 100px; margin-right: 2px; flex: none; }
.sel select { appearance: none; width: 100%; height: 22px; border: 1px solid #d9d9d9; border-radius: 3px; background: #fff; padding: 0 3px; display: block; }
.sel .car { position: absolute; right: 6px; top: 10px; }
.sel.short { width: 59px; margin: 0 3px 0 2px; }
.tick { display: flex; align-items: center; gap: 3px; margin: 0 3px 0 1px; }
.dimmed, .lit, .spin { display: flex; align-items: center; color: #777; }
.dimmed input, .lit input { width: 80px; height: 22px; border: 1px solid #bfc7d5; border-radius: 3px; background: #e4e4e4; padding: 0 2px; color: #999; margin-right: 2px; }
.lit { color: #262626; } .lit input { background: #fff; border-color: #d9d9d9; color: #262626; }
.bar { width: 1px; height: 17px; background: #d0d0d0; margin: 0 5px 0 3px; }
.lit + .bar { margin-right: 3px; margin-left: 2px; }
.spin { gap: 1px; margin-right: 3px; }
.spin span { position: relative; }
.spin input { width: 62px; height: 22px; border: 1px solid #d9d9d9; border-radius: 3px; background: #fff; padding: 0 2px; display: block; color: #888; }
.spin .car { position: absolute; right: 5px; }
.spin .up { top: 5px; transform: rotate(180deg); } .spin .dn { bottom: 5px; }

main { flex: 1; min-height: 0; display: grid; grid-template-columns: 155px 274px 4px minmax(0, 1fr) 4px 275px; position: relative; background: #fff; }
.panel { border: 1px solid #cfcfcf; border-top: 0; display: flex; flex-direction: column; min-height: 0; min-width: 0; background: #fff; }
.strip { height: 12px; flex: none; background: #e6e6e6; border-bottom: 1px solid #d0d0d0; border-top: 1px solid #d0d0d0; display: flex; justify-content: flex-end; align-items: center; padding-right: 3px; }
.strip button { font-size: 14px; line-height: 10px; color: #888; }
.ptitle { height: 22px; flex: none; background: #f1f1f1; border-bottom: 1px solid #d0d0d0; line-height: 22px; padding-left: 8px; color: #777; }
.navtools { height: 28px; flex: none; border-bottom: 1px solid #d0d0d0; display: flex; align-items: center; gap: 4px; padding-left: 1px; }
.navtools button { width: 24px; height: 22px; border-radius: 3px; justify-content: center; }
.navtools button.on { background: #c2dbf4; }
.navbody { flex: 1; min-height: 0; display: flex; overflow: hidden; padding-top: 4px; }
.navlist { flex: 1; display: flex; flex-direction: column; gap: 3px; min-width: 0; }
.ngroup { height: 25px; flex: none; background: #ececec; padding-left: 3px; width: 100%; position: relative; gap: 2px; }
.ngroup em { font-style: normal; margin-left: auto; background: linear-gradient(90deg, #f8d9a5, #edbd62); color: #6b3a00; border-radius: 10px 0 0 10px; height: 19px; line-height: 19px; padding-left: 8px; width: 53px; overflow: hidden; }
.reddot { width: 6px; height: 6px; border-radius: 50%; background: #f00; margin: -15px 0 0 -2px; }
.nitem { height: 25px; flex: none; padding-left: 17px; gap: 14px; width: 100%; }
.nitem.on { background: #d3e6fe; }
.track { width: 14px; flex: none; display: flex; justify-content: center; }
.thumb { width: 8px; border-radius: 4px; background: #cbcbcb; display: block; }
.navthumb { margin: 87px 0 14px; }

.mid { display: flex; flex-direction: column; gap: 4px; padding-left: 4px; min-height: 0; }
.comps { flex: 1; }
.attrs { height: 404px; flex: none; border-bottom: 0; }
.tabs { display: flex; height: 23px; flex: none; background: #f1f1f1; border-bottom: 1px solid #c8c8c8; }
.tabs button { width: 65px; justify-content: center; border-right: 1px solid #c4c4cc; color: #777; background: #e0e0e0; border-top: 1px solid #c4c4cc; }
.tabs button.on { color: #222; font-weight: 700; background: #f4f4f4; }
.tools { display: flex; align-items: center; height: 28px; flex: none; border-bottom: 1px solid #dcdcdc; gap: 10px; padding: 1px 0 0 3px; }
.tools button { gap: 5px; }
.tools .car { margin-left: 2px; }
.tools .ff { margin-left: auto; border: 1px solid #e2e2e2; border-radius: 3px; height: 19px; width: 11px; justify-content: center; margin-right: 1px; }
.find { display: flex; align-items: center; height: 19px; flex: none; border-bottom: 1px solid #dcdcdc; padding: 0 5px 0 2px; }
.find input { flex: 1; border: 0; padding: 0; height: 17px; min-width: 0; }
.find input::placeholder { color: #999; }
.tree { list-style: none; margin: 0; padding: 3px 0 0; }
.tree li { height: 24px; display: flex; align-items: center; padding-left: 40px; }
.tree .root { padding-left: 12px; gap: 3px; }
.tree button { height: 21px; padding: 0 5px 0 3px; border-radius: 3px; }
.tree button.on { background: #c2daf4; }

.tablebox { flex: 1; min-height: 0; overflow: hidden; display: flex; border-bottom: 1px solid #cfcfcf; }
.tablebox .track { width: 15px; }
table { table-layout: fixed; border-collapse: separate; border-spacing: 0; width: 100%; }
.tablebox table { flex: 1; align-self: flex-start; }
.c1 { width: 22px; } .c3 { width: 89px; } .c4 { width: 41px; }
th, td { height: 21px; padding: 0; border: solid #dcdcdc; border-width: 0 1px 1px 0; font-weight: 400; line-height: 18px; overflow: hidden; }
th, .num, .nm, .val, .ln { padding-top: 2px; }
th { text-align: center; }
td > input[type=checkbox] { margin: 0 auto; }
.num { background: #f0f0f0; text-align: center; padding-left: 2px; }
.nm { padding-left: 3px; position: relative; }
.blue { color: #1763f5; }
.val { padding-left: 3px; } .dim { color: #8c8c8c; }
.fold { display: inline-block; width: 13px; height: 13px; border: 1px solid #777; border-radius: 2px; vertical-align: -2px; margin-right: 6px; background: linear-gradient(#444, #444) center / 5px 1px no-repeat #fff; position: relative; z-index: 1; }
.p1 { padding-left: 2px; }
.p2 { padding-left: 31px; }
.p2::before { content: ""; position: absolute; left: 8px; top: 0; bottom: 0; width: 17px; border-left: 1px solid #dcdcdc; background: linear-gradient(#dcdcdc, #dcdcdc) 0 50% / 100% 1px no-repeat; }
.attrthumb { height: 178px; margin-top: 14px; }
.foot { height: 31px; flex: none; display: flex; padding: 5px 5px 4px; }
.foot.end { justify-content: flex-end; height: 39px; padding: 7px 3px 6px; }
.plain { border: 1px solid #c4c4c4; border-radius: 4px; padding: 0 15px; background: #fff; }
.end .plain { padding: 0 8px; }

.split { display: flex; align-items: center; position: relative; }
.split i { height: 100px; width: 4px; background: #6a707d; }
.split i::after { content: ""; position: absolute; right: 0; top: 50%; margin-top: -3px; border: 3px solid transparent; border-right-color: #ddd; border-left: 0; }
.split.right i::after { transform: rotate(180deg); }

.canvas { position: relative; background: #000; overflow: hidden; min-width: 0; }
.draw { width: 100%; height: 100%; }
.dims text { font: 18px "Noto Sans CJK SC", sans-serif; fill: #fff; text-anchor: middle; }
.axes text { font: 15px "Noto Sans CJK SC", sans-serif; text-anchor: middle; }
.warn { position: absolute; left: 10px; top: 6px; margin: 0; line-height: 17px; color: #3c3c3c; }
.viewbar { position: absolute; right: 0; top: 0; width: 33px; height: 246px; background: #fff; border-radius: 0 3px 3px 3px; display: flex; flex-direction: column; align-items: center; padding: 13px 2px 0 0; gap: 9px; }
.viewbar .car { margin: -1px 0 -2px; }
.viewbar hr { width: 23px; margin: -2px 0 -3px; border: 0; border-top: 1px solid #555; }
.viewbar text { font: bold 8px "Noto Sans", sans-serif; fill: #1f78e6; }
.prompt { position: absolute; left: 0; right: 0; bottom: 0; height: 27px; background: rgba(64, 64, 64, .65); color: #fff; display: flex; align-items: center; justify-content: center; gap: 3px; font-weight: 500; }

.show { border-right: 0; }
.rtabs { display: flex; align-items: flex-end; gap: 4px; height: 27px; flex: none; border-bottom: 1px solid #b9bcc6; padding-left: 2px; }
.rtabs button { height: 21px; width: 60px; justify-content: center; background: #dedede; border-radius: 3px 3px 0 0; }
.rtabs button.on { height: 24px; width: 62px; border: 1px solid #b9bcc6; border-bottom: 0; background: #fff; color: #1f78e6; margin-bottom: -1px; }
.rbox { flex: 1; min-height: 0; display: flex; overflow: hidden; padding: 2px 0 0 2px; border-bottom: 1px solid #cfcfcf; }
.rbox .track { width: 13px; }
.clip { flex: 1; border-top: 1px solid #dcdcdc; border-left: 1px solid #cfcfcf; min-width: 0; overflow: hidden; }
.k { width: 63px; }
.ln { position: relative; }
.ln.l0 { padding-left: 2px; } .ln.l1 { padding-left: 12px; } .ln.l2 { padding-left: 41px; }
.ln.l1::before, .ln.l2::before { content: ""; position: absolute; left: 8px; top: 0; bottom: 0; width: 4px; border-left: 1px solid #e0e0e0; }
.ln.l2::after { content: ""; position: absolute; left: 18px; top: 0; bottom: 0; border-left: 1px solid #e0e0e0; }
.ln.l2.last::after { bottom: 50%; }
.ln u { position: absolute; left: 18px; top: 9px; width: 17px; height: 1px; background: #e0e0e0; }
.showthumb { height: 212px; margin-top: 13px; }

.mark { position: absolute; left: 163px; top: 406px; width: 283px; bottom: 26px; border: 3px solid #ff1e14; border-radius: 4px; pointer-events: none; }

footer { height: 28px; flex: none; background: #fcfcfc; display: flex; align-items: center; padding-left: 2px; }
footer span { padding-top: 2px; }
footer b { font-weight: 400; margin-left: 4px; }
.s1 { width: 90px; } .s2 { width: 140px; } .s3 { width: 110px; } .s4 { width: 110px; }
.s3 b, .s4 b { margin-left: 0; }
footer button { height: 25px; width: 25px; border: 1px solid #9a9a9a; border-radius: 3px; justify-content: center; gap: 6px; margin-right: 3px; background: #fff; align-self: flex-end; }
footer button.w { width: 36px; }
footer button.gap { margin-left: 3px; }
footer button.on { background: #d3e4fb; border-color: #4a8fe8; }
.ime { margin-left: auto; align-self: flex-end; }
</style>
